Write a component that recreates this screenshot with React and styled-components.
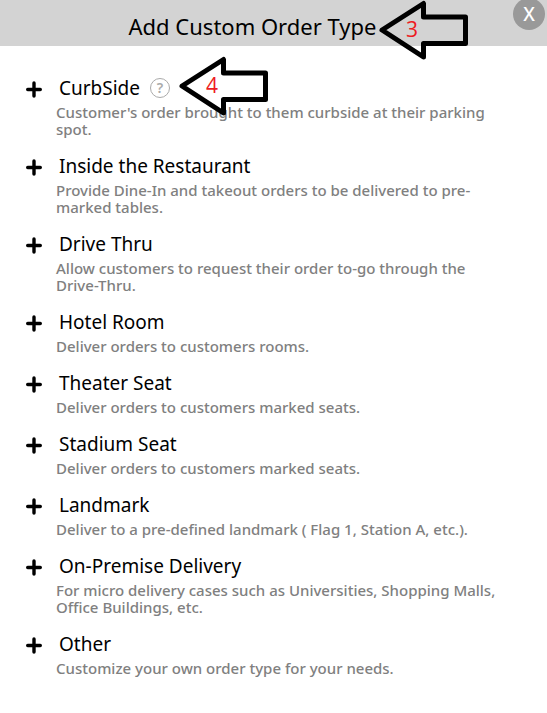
import React from 'react'
import styled, { createGlobalStyle } from 'styled-components'

const orderTypes = [
  {
    name: 'CurbSide',
    text: "Customer's order brought to them curbside at their parking spot.",
    help: true,
    step: 4,
  },
  {
    name: 'Inside the Restaurant',
    text: 'Provide Dine-In and takeout orders to be delivered to pre-marked tables.',
  },
  {
    name: 'Drive Thru',
    text: 'Allow customers to request their order to-go through the Drive-Thru.',
  },
  { name: 'Hotel Room', text: 'Deliver orders to customers rooms.' },
  { name: 'Theater Seat', text: 'Deliver orders to customers marked seats.' },
  { name: 'Stadium Seat', text: 'Deliver orders to customers marked seats.' },
  { name: 'Landmark', text: 'Deliver to a pre-defined landmark ( Flag 1, Station A, etc.).' },
  {
    name: 'On-Premise Delivery',
    text: 'For micro delivery cases such as Universities, Shopping Malls, Office Buildings, etc.',
  },
  { name: 'Other', text: 'Customize your own order type for your needs.' },
]

function StepArrow({ step }) {
  return (
    <Arrow viewBox="0 0 92 60" aria-hidden="true">
      <path
        d="M4 30 L45.5 3.5 V17 H87.5 V43.5 H45.5 V57 Z"
        fill="none"
        stroke="#000"
        strokeWidth="5"
        strokeLinejoin="round"
      />
      <text x="28" y="37">{step}</text>
    </Arrow>
  )
}

export default function App() {
  return (
    <>
      <GlobalStyle />
      <Header>
        <Title>
          Add Custom Order Type
          <TitleArrow>
            <StepArrow step={3} />
          </TitleArrow>
        </Title>
        <CloseButton type="button" aria-label="Close">X</CloseButton>
      </Header>

      <List>
        {orderTypes.map((type) => (
          <Item key={type.name}>
            <AddButton type="button" aria-label={`Add ${type.name}`}>
              <svg width="16" height="17" viewBox="0 0 16 17">
                <path
                  d="M8 2 V15 M1.7 8.5 H14.3"
                  stroke="#000"
                  strokeWidth="3.4"
                  strokeLinecap="round"
                />
              </svg>
            </AddButton>
            <div>
              <NameRow>
                <Name>{type.name}</Name>
                {type.help && (
                  <HelpButton type="button" aria-label={`About ${type.name}`}>?</HelpButton>
                )}
                {type.step && (
                  <ItemArrow>
                    <StepArrow step={type.step} />
                  </ItemArrow>
                )}
              </NameRow>
              <Description>{type.text}</Description>
            </div>
          </Item>
        ))}
      </List>
    </>
  )
}

const GlobalStyle = createGlobalStyle`
  * {
    box-sizing: border-box;
  }

  body {
    margin: 0;
    background: #fff;
    color: #000;
    font-family: 'Noto Sans', 'Open Sans', sans-serif;
  }

  button {
    padding: 0;
    border: 0;
    background: none;
    font-family: inherit;
    cursor: pointer;
  }
`

const Header = styled.header`
  position: relative;
  display: flex;
  justify-content: center;
  align-items: center;
  height: 46px;
  padding: 6px 42px 0 0;
  background: #d3d3d3;
`

const Title = styled.h1`
  position: relative;
  margin: 0;
  font-size: 22px;
  line-height: 28px;
  font-weight: 400;
`

const CloseButton = styled.button`
  position: absolute;
  top: -2px;
  right: 2px;
  width: 32px;
  height: 32px;
  border-radius: 50%;
  && {
    background: #999;
  }
  color: #fff;
  font-size: 19px;
  font-weight: 500;
  line-height: 30px;
`

const Arrow = styled.svg`
  display: block;
  width: 92px;
  height: 60px;

  text {
    fill: #ed1c24;
    font-family: 'Open Sans', sans-serif;
    font-size: 21px;
  }
`

const TitleArrow = styled.span`
  position: absolute;
  top: -12px;
  left: 100%;
  margin-left: 2px;
  z-index: 1;
`

const List = styled.ul`
  display: flex;
  flex-direction: column;
  gap: 16px;
  margin: 0;
  padding: 30px 44px 24px 26px;
  list-style: none;
`

const Item = styled.li`
  display: grid;
  grid-template-columns: 16px 1fr;
  column-gap: 14px;
`

const AddButton = styled.button`
  display: flex;
  align-items: center;
  height: 26px;
`

const NameRow = styled.div`
  position: relative;
  display: flex;
  align-items: center;
  gap: 10px;
  width: fit-content;
  height: 24px;
  padding-left: 3px;
`

const Name = styled.h2`
  margin: 0;
  font-size: 19px;
  line-height: 24px;
  font-weight: 400;
`

const HelpButton = styled.button`
  width: 20px;
  height: 20px;
  && {
    border: 1px solid #aaa;
  }
  border-radius: 50%;
  color: #aaa;
  font-size: 14px;
  font-weight: 600;
  line-height: 18px;
`

const ItemArrow = styled.span`
  position: absolute;
  top: -20px;
  left: 100%;
  margin-left: 8px;
  z-index: 1;
`

const Description = styled.p`
  margin: 4px 0 0;
  color: #808080;
  font-size: 15px;
  line-height: 17px;
  font-weight: 500;
`
